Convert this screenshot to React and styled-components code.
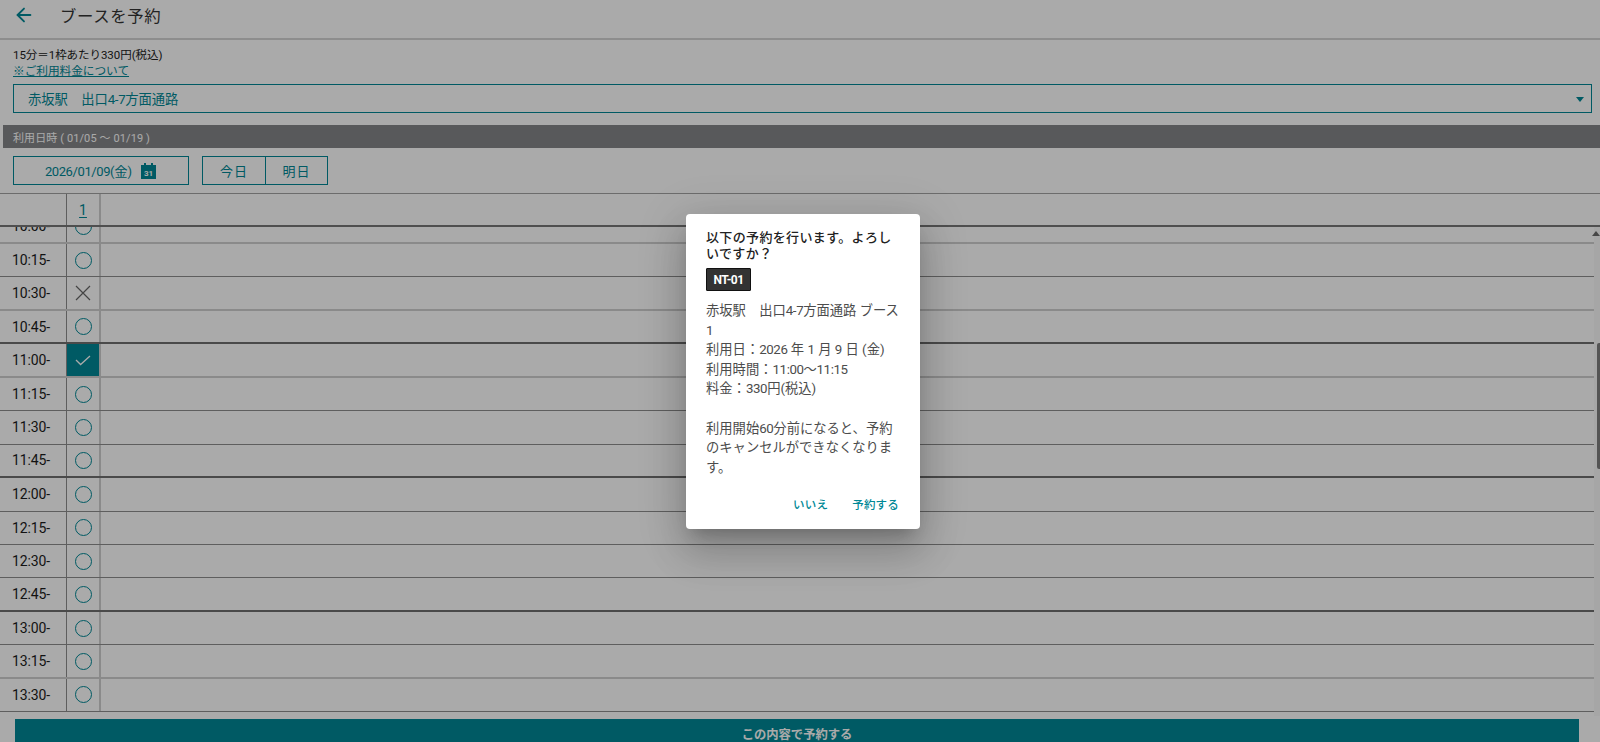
import React from 'react';
import styled, { createGlobalStyle } from 'styled-components';
import { ArrowLeft } from 'lucide-react';

const Global = createGlobalStyle`
  html, body { margin: 0; height: 100%; overflow: hidden; background: #fff; }
  body { font-family: Roboto, "Noto Sans CJK JP", sans-serif; color: #212121; }
  * { box-sizing: border-box; }
`;

const TEAL = '#008896';

const Page = styled.div`
  width: 1600px; height: 742px; display: flex; flex-direction: column; overflow: hidden; position: relative;
`;
const Header = styled.header`
  height: 40px; flex: none; display: flex; align-items: center; padding: 0 0 9px 13px;
  border-bottom: 2px solid #d4d4d4;
`;
const BackIcon = styled(ArrowLeft)`color: ${TEAL};`;
const Title = styled.h1`
  margin: 0 0 0 25px; font-size: 16.4px; font-weight: 400; letter-spacing: .6px; color: #333;
`;
const Notice = styled.div`
  padding: 7px 13px 0; font-size: 11.5px; line-height: 16px; flex: none; height: 44px; letter-spacing: -.05px;
`;
const FeeLink = styled.a`
  display: block; color: ${TEAL}; text-decoration: underline; font-size: 11.7px;
`;
const Select = styled.div`
  flex: none; margin: 0 8px 0 13px; height: 29px; border: 1px solid ${TEAL}; display: flex; align-items: center;
  padding: 0 7px 0 14px; justify-content: space-between; color: ${TEAL}; font-size: 13.3px;
`;
const Caret = styled.span`
  width: 0; height: 0; border: 4px solid transparent; border-top: 5px solid ${TEAL}; margin-top: 5px;
`;
const SectionBar = styled.div`
  flex: none; margin: 12px 0 0 3px; height: 23px; background: #858689; color: #fff; font-size: 11px;
  display: flex; align-items: center; padding-left: 10px; letter-spacing: .1px;
`;
const Controls = styled.div`
  flex: none; display: flex; gap: 13px; padding: 8px 13px 0; height: 45px;
`;
const DateButton = styled.button`
  width: 176px; height: 29px; background: none; border: 1px solid ${TEAL}; color: ${TEAL};
  font: 400 13px Roboto, "Noto Sans CJK JP", sans-serif; display: flex; align-items: center; justify-content: center; gap: 9px; padding: 0 1px 0 0;
`;
const Num = styled.span`letter-spacing: -.4px;`;
const DayGroup = styled.div`
  display: flex; height: 29px; border: 1px solid ${TEAL};
`;
const DayButton = styled.button`
  width: ${p => p.$w}px; background: none; border: 0; border-left: ${p => p.$first ? 0 : `1px solid ${TEAL}`};
  color: ${TEAL}; font: 400 13px Roboto, "Noto Sans CJK JP", sans-serif; letter-spacing: 1px; padding: 0;
`;
const TableHead = styled.div`
  flex: none; display: grid; grid-template-columns: 67px 34px 1fr; height: 34px;
  border-top: 1px solid #a2a2a2; border-bottom: 2px solid #777;
`;
const HeadCell = styled.div`
  border-right: ${p => p.$line || 0}; color: ${TEAL}; font-size: 14px; display: flex; align-items: center; justify-content: center;
  text-decoration: underline; text-underline-offset: 2px;
`;
const Scroller = styled.div`
  height: 489px; flex: none; overflow: hidden; border-right: 6px solid #fafafa;
`;
const Rows = styled.div`margin-top: -16.4px;`;
const LINE = {
  dark: '2px solid #6f6f6f',
  thin: '1px solid #8e8e8e',
  light: '2px solid #d0d0d0',
};
const Row = styled.div`
  height: 33.45px; display: grid; grid-template-columns: 67px 34px 1fr; border-bottom: ${p => LINE[p.$line]};
`;
const Time = styled.div`
  font-size: 14px; display: flex; align-items: center; padding-left: 12px; color: #1c1c1c;
  border-right: 1px solid #8e8e8e; letter-spacing: -.1px;
`;
const Slot = styled.div`
  display: flex; align-items: center; justify-content: center; border-right: 2px solid #d0d0d0;
  background: ${p => p.$on ? TEAL : 'transparent'};
`;
const Filler = styled.div``;
const Circle = styled.span`
  width: 17px; height: 17px; border-radius: 50%; border: 1.5px solid ${TEAL};
`;
const Submit = styled.button`
  flex: none; margin: 3px 21px 0 15px; height: 40px; background: ${TEAL}; border: 0; color: #fff;
  font: 700 12.3px Roboto, "Noto Sans CJK JP", sans-serif; padding: 0 0 10px;
`;
const Thumb = styled.div`
  position: absolute; right: 0; top: 343px; width: 3px; height: 126px; background: #7f7f7f; border-radius: 2px 0 0 2px; z-index: 1;
`;
const ScrollArrow = styled.div`
  position: absolute; right: 0; top: 231px; width: 0; height: 0; border: 4px solid transparent; border-bottom: 5px solid #6b6b6b; border-top: 0; z-index: 1;
`;
const Overlay = styled.div`
  position: absolute; inset: 0; background: rgba(0,0,0,.335); z-index: 2; display: flex; align-items: flex-start; justify-content: center; padding: 214px 0 0 6px;
`;
const Dialog = styled.div`
  width: 234px; height: 315px; background: #fff; border-radius: 4px; padding: 16px 20px 0;
  box-shadow: 0 11px 15px -7px rgba(0,0,0,.2), 0 24px 38px 3px rgba(0,0,0,.14), 0 9px 46px 8px rgba(0,0,0,.12);
  display: flex; flex-direction: column;
`;
const DialogTitle = styled.h2`
  margin: 0; font-size: 13px; line-height: 16px; font-weight: 500; color: #212121; letter-spacing: .35px;
`;
const Tag = styled.span`
  align-self: flex-start; margin-top: 6px; width: 45px; height: 23px; background: #333; border: 1px solid #111; border-radius: 1px; color: #fff;
  font-size: 12px; font-weight: 700; display: flex; align-items: center; justify-content: center; letter-spacing: -.55px;
`;
const Body = styled.div`
  margin-top: 10px; font-size: 13.3px; line-height: 19.6px; color: #4c4c4c;
`;
const Actions = styled.div`
  display: flex; justify-content: flex-end; gap: 24px; margin-top: 19px; padding-right: 1px;
`;
const TextButton = styled.button`
  background: none; border: 0; padding: 0; color: ${TEAL}; font: 500 11.5px Roboto, "Noto Sans CJK JP", sans-serif; letter-spacing: .2px;
`;

const rows = [
  ['10:00-', 'o', 'light'], ['10:15-', 'o', 'thin'], ['10:30-', 'x', 'light'], ['10:45-', 'o', 'dark'],
  ['11:00-', 'c', 'light'], ['11:15-', 'o', 'thin'], ['11:30-', 'o', 'thin'], ['11:45-', 'o', 'dark'],
  ['12:00-', 'o', 'thin'], ['12:15-', 'o', 'thin'], ['12:30-', 'o', 'thin'], ['12:45-', 'o', 'dark'],
  ['13:00-', 'o', 'thin'], ['13:15-', 'o', 'light'], ['13:30-', 'o', 'thin'],
];

const CalendarIcon = () => (
  <svg width="15" height="16" viewBox="0 0 15 16">
    <path fill={TEAL} d="M3 0h2v2h5V0h2v2h3v14H0V2h3z" />
    <text x="7.5" y="13.2" textAnchor="middle" fontSize="8" fontWeight="700" fill="#fff" fontFamily="Roboto">31</text>
  </svg>
);
const Cross = () => (
  <svg width="16" height="16" viewBox="0 0 16 16"><path d="M1 1l14 14M15 1L1 15" stroke="#666" strokeWidth="1.2" fill="none" /></svg>
);
const Check = () => (
  <svg width="16" height="12" viewBox="0 0 16 12"><path d="M1 6l4.6 4.5L15 2" stroke="#fff" strokeWidth="1.3" fill="none" /></svg>
);
const marks = { o: <Circle />, x: <Cross />, c: <Check /> };

export default function App() {
  return (
    <Page>
      <Global />
      <Header>
        <BackIcon size={22} strokeWidth={2} />
        <Title>ブースを予約</Title>
      </Header>
      <Notice>
        15分＝1枠あたり330円(税込)
        <FeeLink>※ご利用料金について</FeeLink>
      </Notice>
      <Select><span>赤坂駅　出口<Num>4-7</Num>方面通路</span><Caret /></Select>
      <SectionBar>利用日時 ( 01/05 〜 01/19 )</SectionBar>
      <Controls>
        <DateButton><span><Num>2026/01/09</Num>(金)</span><CalendarIcon /></DateButton>
        <DayGroup>
          <DayButton $first $w={62}>今日</DayButton>
          <DayButton $w={62}>明日</DayButton>
        </DayGroup>
      </Controls>
      <TableHead>
        <HeadCell $line="1px solid #8e8e8e" />
        <HeadCell $line="2px solid #d0d0d0">1</HeadCell>
        <HeadCell />
      </TableHead>
      <Scroller>
        <Rows>
          {rows.map(([t, m, line]) => (
            <Row key={t} $line={line}>
              <Time>{t}</Time>
              <Slot $on={m === 'c'}>{marks[m]}</Slot>
              <Filler />
            </Row>
          ))}
        </Rows>
      </Scroller>
      <Submit>この内容で予約する</Submit>
      <Thumb />
      <ScrollArrow />
      <Overlay>
        <Dialog>
          <DialogTitle>以下の予約を行います。よろしいですか？</DialogTitle>
          <Tag>NT-01</Tag>
          <Body>
            赤坂駅　出口<Num>4-7</Num>方面通路 ブース 1<br />
            利用日：<Num>2026</Num> 年 1 月 9 日 (金)<br />
            利用時間：<Num>11:00〜11:15</Num><br />
            料金：<Num>330</Num>円(税込)<br />
            <br />
            利用開始<Num>60</Num>分前になると、予約のキャンセルができなくなります。
          </Body>
          <Actions>
            <TextButton>いいえ</TextButton>
            <TextButton>予約する</TextButton>
          </Actions>
        </Dialog>
      </Overlay>
    </Page>
  );
}
